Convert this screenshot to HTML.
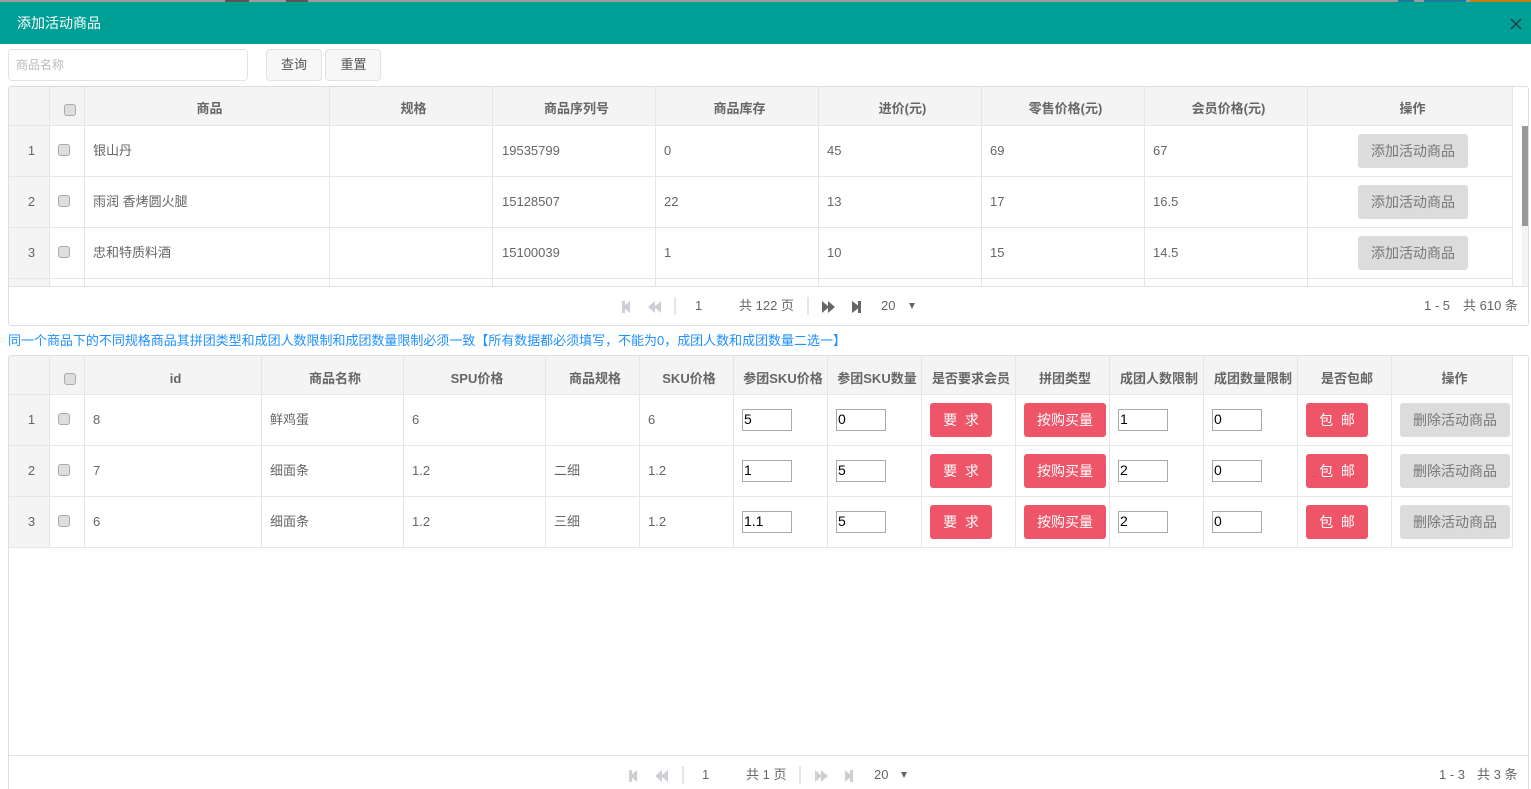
<!DOCTYPE html>
<html lang="zh"><head><meta charset="utf-8"><title>添加活动商品</title>
<style>
*{box-sizing:border-box}
html,body{margin:0;padding:0;width:1531px;height:789px;overflow:hidden;background:#fff}
body{position:relative;font-family:"Liberation Sans","Noto Sans CJK SC",sans-serif;font-size:13px;color:#666}
.a{position:absolute}
table{border-collapse:separate;border-spacing:0;table-layout:fixed;position:absolute}
td,th{border-right:1px solid #e6e6e6;border-bottom:1px solid #e6e6e6;padding:0 8px 2px;overflow:hidden;white-space:nowrap;text-align:left;font-weight:normal}
th{background:#f4f4f4;font-weight:bold;text-align:center;height:39px;padding:2px 0 0 5px}
.t2 th{padding:4px 0 0 5px}
.t2 th.i{padding-top:6px}
td{height:51px}
td.z{padding-bottom:4px}
td.n{background:#f4f4f4;text-align:center;padding:0 0 2px 5px}
td.c,th.c{padding:0;position:relative}
i.k{position:absolute;width:12px;height:12px;background:#dedede;border:1px solid #aaa;border-radius:3px;display:block}
th.c i.k{left:14px;top:17px}
td.c i.k{left:8px;top:18px}
.box{border:1px solid #ddd;border-radius:3px;left:8px;width:1521px;position:absolute;overflow:hidden}
.b{display:block;height:34px;line-height:34px;text-align:center;border-radius:3px;font-size:14px;position:relative;top:1px}
.r{background:#ef5568;color:#fff;width:62px}
.g{background:#dcdcdc;color:#777;width:110px}
input{width:50px;height:22px;border:1px solid #aaa;padding:0 1px 2px;font:14px "Liberation Sans",sans-serif;color:#000;display:block;background:#fff;border-radius:0;outline:none;position:relative;top:1px}
.t{position:absolute;white-space:nowrap;line-height:18px}
</style></head><body>

<div class="a" style="left:0;top:0;width:1531px;height:2px;background:#9c9c9c"></div>
<div class="a" style="left:225px;top:0;width:24px;height:2px;background:#555"></div>
<div class="a" style="left:286px;top:0;width:22px;height:2px;background:#555"></div>
<div class="a" style="left:1398px;top:0;width:16px;height:2px;background:#1a7a9c"></div>
<div class="a" style="left:1424px;top:0;width:42px;height:2px;background:#1a7a9c"></div>
<div class="a" style="left:1470px;top:0;width:61px;height:2px;background:#c08010"></div>

<div class="a" style="left:0;top:2px;width:1531px;height:42px;background:#009f95"></div>
<div class="t" style="left:17px;top:14px;font-size:14px;color:#fff">添加活动商品</div>
<svg class="a" style="left:1510px;top:18px" width="12" height="12" viewBox="0 0 12 12"><path d="M1 1L11 11M11 1L1 11" stroke="#2c3a4a" stroke-width="1.5" fill="none"/></svg>

<div class="a" style="left:8px;top:49px;width:240px;height:32px;border:1px solid #e2e2e2;border-radius:4px;background:#fff"></div>
<div class="t" style="left:16px;top:56px;font-size:12px;color:#bbb">商品名称</div>
<div class="a" style="left:266px;top:49px;width:56px;height:32px;border:1px solid #e2e2e2;border-radius:4px;background:#f7f7f7;text-align:center;line-height:30px;color:#555">查询</div>
<div class="a" style="left:325px;top:49px;width:56px;height:32px;border:1px solid #e2e2e2;border-radius:4px;background:#f7f7f7;text-align:center;line-height:30px;color:#555;padding-left:1px">重置</div>

<!-- table 1 -->
<div class="box" style="top:86px;height:240px">
<table style="left:0;top:0;width:1504px">
<colgroup><col style="width:41px"><col style="width:35px"><col style="width:245px"><col style="width:163px"><col style="width:163px"><col style="width:163px"><col style="width:163px"><col style="width:163px"><col style="width:163px"><col style="width:205px"></colgroup>
<tr><th></th><th class="c"><i class="k"></i></th><th>商品</th><th>规格</th><th>商品序列号</th><th>商品库存</th><th>进价(元)</th><th>零售价格(元)</th><th>会员价格(元)</th><th>操作</th></tr>
<tr><td class="n">1</td><td class="c"><i class="k"></i></td><td class="z">银山丹</td><td></td><td style="padding-left:9px">19535799</td><td>0</td><td>45</td><td>69</td><td>67</td><td style="padding-left:50px"><span class="b g">添加活动商品</span></td></tr>
<tr><td class="n">2</td><td class="c"><i class="k"></i></td><td class="z">雨润 香烤圆火腿</td><td></td><td style="padding-left:9px">15128507</td><td>22</td><td>13</td><td>17</td><td>16.5</td><td style="padding-left:50px"><span class="b g">添加活动商品</span></td></tr>
<tr><td class="n">3</td><td class="c"><i class="k"></i></td><td class="z">忠和特质料酒</td><td></td><td style="padding-left:9px">15100039</td><td>1</td><td>10</td><td>15</td><td>14.5</td><td style="padding-left:50px"><span class="b g">添加活动商品</span></td></tr>
<tr><td class="n"></td><td class="c"></td><td></td><td></td><td></td><td></td><td></td><td></td><td></td><td></td></tr>
</table>
<div class="a" style="left:1513px;top:39px;width:7px;height:160px;background:#f4f4f4"></div>
<div class="a" style="left:1513px;top:39px;width:6px;height:100px;background:#999"></div>
<div class="a" style="left:0;top:199px;width:1519px;height:39px;background:#fff;border-top:1px solid #e2e2e2"></div>
</div>

<!-- pager 1 -->
<svg class="a" style="left:615px;top:296px" width="310" height="22" viewBox="0 0 310 22">
<g fill="#ccd0d4"><rect x="7" y="5" width="3" height="12"/><path d="M15 5V17L8 11Z"/><path d="M40 5V17L33 11ZM46 5V17L39 11Z"/></g>
<rect x="59" y="1" width="2" height="18" fill="#e6e6e6"/><rect x="192" y="1" width="2" height="18" fill="#e6e6e6"/>
<g fill="#666"><path d="M207 5V17L214 11ZM213 5V17L220 11Z"/><rect x="243" y="5" width="3" height="12"/><path d="M237 5V17L245 11Z"/><path d="M294 7H300L297 13Z"/></g>
</svg>
<div class="t" style="left:695px;top:297px">1</div>
<div class="t" style="left:739px;top:297px">共 122 页</div>
<div class="t" style="left:881px;top:297px">20</div>
<div class="t" style="left:1424px;top:297px">1 - 5</div>
<div class="t" style="left:1463px;top:297px">共 610 条</div>

<div class="t" style="left:8px;top:332px;color:#1e90ff;letter-spacing:-0.02px">同一个商品下的不同规格商品其拼团类型和成团人数限制和成团数量限制必须一致【所有数据都必须填写，不能为0，成团人数和成团数量二选一】</div>

<!-- table 2 -->
<div class="box" style="top:355px;height:450px">
<table class="t2" style="left:0;top:0;width:1504px">
<colgroup><col style="width:41px"><col style="width:35px"><col style="width:177px"><col style="width:142px"><col style="width:142px"><col style="width:94px"><col style="width:94px"><col style="width:94px"><col style="width:94px"><col style="width:94px"><col style="width:94px"><col style="width:94px"><col style="width:94px"><col style="width:94px"><col style="width:121px"></colgroup>
<tr><th></th><th class="c"><i class="k"></i></th><th class="i">id</th><th>商品名称</th><th>SPU价格</th><th>商品规格</th><th>SKU价格</th><th>参团SKU价格</th><th>参团SKU数量</th><th>是否要求会员</th><th>拼团类型</th><th>成团人数限制</th><th>成团数量限制</th><th>是否包邮</th><th>操作</th></tr>
<tr><td class="n">1</td><td class="c"><i class="k"></i></td><td>8</td><td class="z">鲜鸡蛋</td><td>6</td><td class="z"></td><td>6</td><td><input value="5"></td><td><input value="0"></td><td><span class="b r">要&nbsp; 求</span></td><td><span class="b r" style="width:82px">按购买量</span></td><td><input value="1"></td><td><input value="0"></td><td><span class="b r">包&nbsp; 邮</span></td><td><span class="b g">删除活动商品</span></td></tr>
<tr><td class="n">2</td><td class="c"><i class="k"></i></td><td>7</td><td class="z">细面条</td><td>1.2</td><td class="z">二细</td><td>1.2</td><td><input value="1"></td><td><input value="5"></td><td><span class="b r">要&nbsp; 求</span></td><td><span class="b r" style="width:82px">按购买量</span></td><td><input value="2"></td><td><input value="0"></td><td><span class="b r">包&nbsp; 邮</span></td><td><span class="b g">删除活动商品</span></td></tr>
<tr><td class="n">3</td><td class="c"><i class="k"></i></td><td>6</td><td class="z">细面条</td><td>1.2</td><td class="z">三细</td><td>1.2</td><td><input value="1.1"></td><td><input value="5"></td><td><span class="b r">要&nbsp; 求</span></td><td><span class="b r" style="width:82px">按购买量</span></td><td><input value="2"></td><td><input value="0"></td><td><span class="b r">包&nbsp; 邮</span></td><td><span class="b g">删除活动商品</span></td></tr>
</table>
<div class="a" style="left:0;top:399px;width:1519px;height:1px;background:#e2e2e2"></div>
</div>

<!-- pager 2 -->
<svg class="a" style="left:622px;top:765px" width="310" height="22" viewBox="0 0 310 22">
<g fill="#ccd0d4"><rect x="7" y="5" width="3" height="12"/><path d="M15 5V17L8 11Z"/><path d="M40 5V17L33 11ZM46 5V17L39 11Z"/></g>
<rect x="60" y="1" width="2" height="18" fill="#e6e6e6"/><rect x="177" y="1" width="2" height="18" fill="#e6e6e6"/>
<g fill="#ccd0d4"><path d="M193 5V17L200 11ZM199 5V17L206 11Z"/><rect x="228" y="5" width="3" height="12"/><path d="M223 5V17L230 11Z"/></g>
<path d="M279 7H285L282 13Z" fill="#666"/>
</svg>
<div class="t" style="left:702px;top:766px">1</div>
<div class="t" style="left:746px;top:766px">共 1 页</div>
<div class="t" style="left:874px;top:766px">20</div>
<div class="t" style="left:1439px;top:766px">1 - 3</div>
<div class="t" style="left:1477px;top:766px">共 3 条</div>

</body></html>
